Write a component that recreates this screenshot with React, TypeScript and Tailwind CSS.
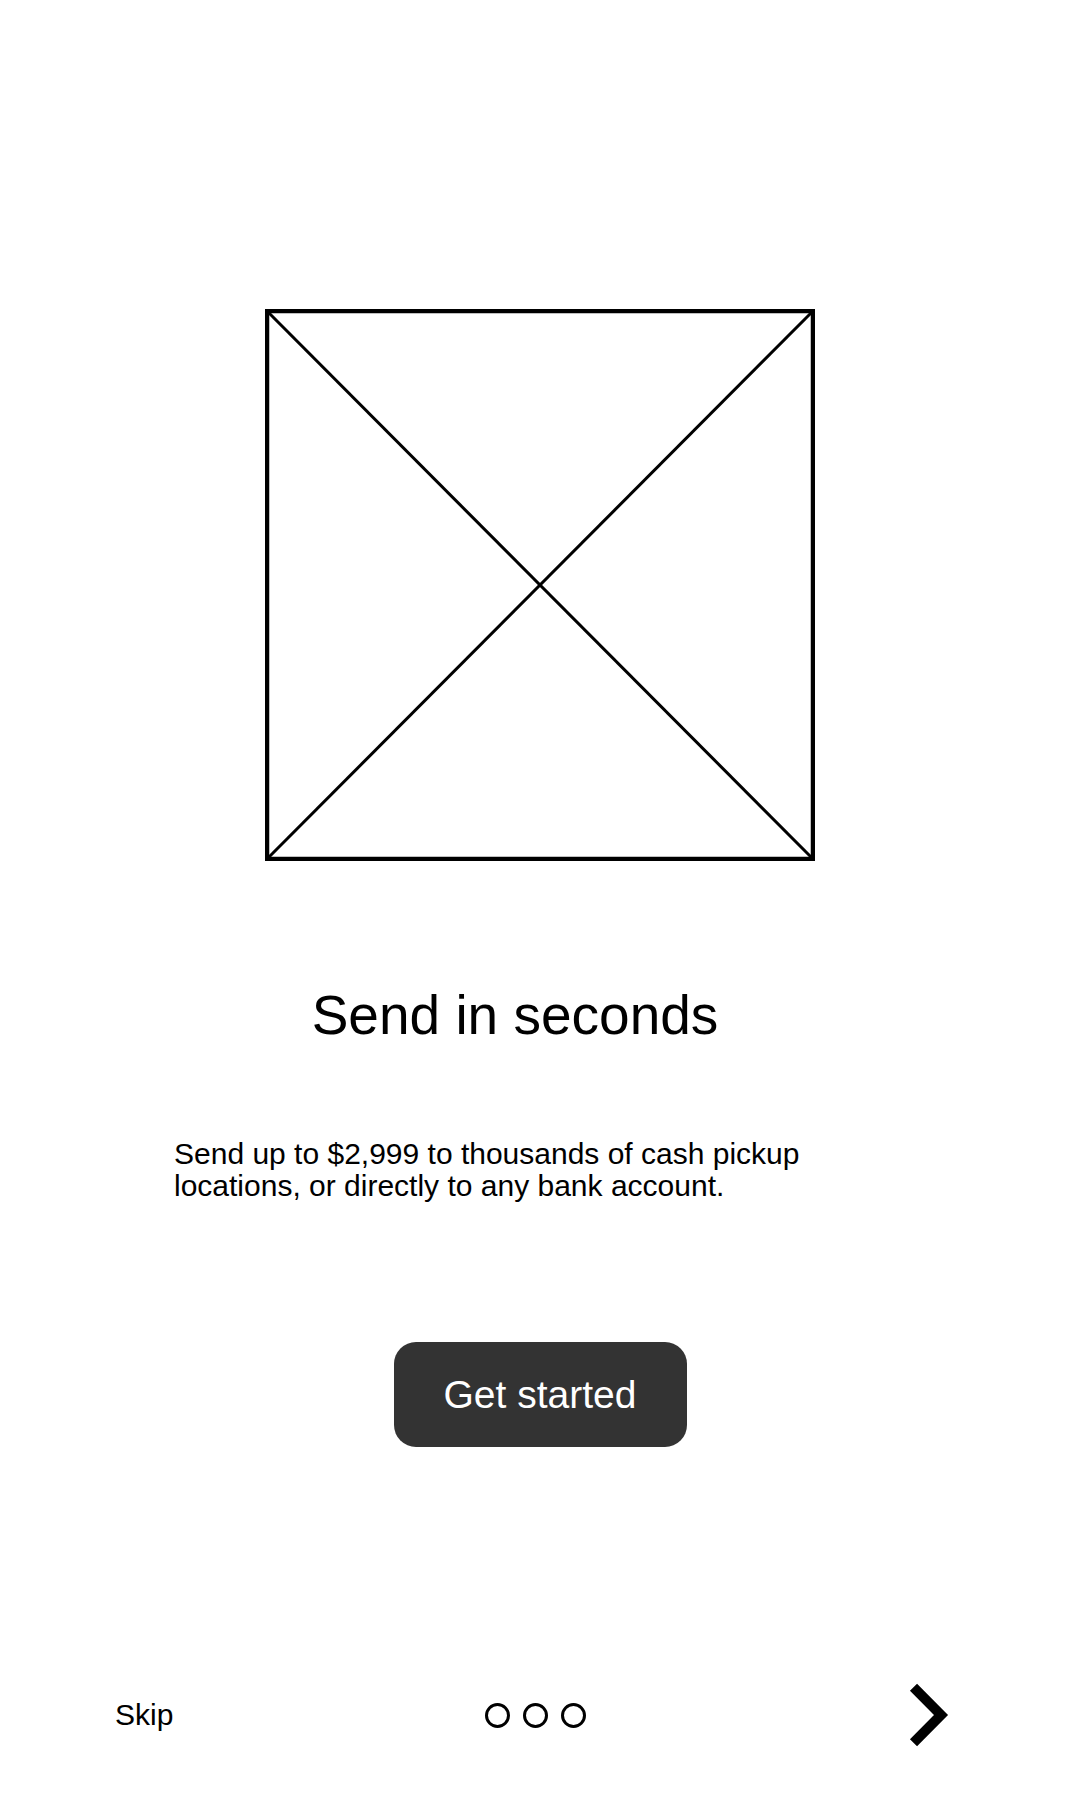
const steps = [1, 2, 3];

function Placeholder() {
  return (
    <svg width="550" height="552" viewBox="0 0 550 552" className="block">
      <rect x="2" y="2" width="546" height="548" fill="white" stroke="black" strokeWidth="4.5" />
      <line x1="2" y1="2" x2="548" y2="550" stroke="black" strokeWidth="3" />
      <line x1="548" y1="2" x2="2" y2="550" stroke="black" strokeWidth="3" />
    </svg>
  );
}

function NextArrow() {
  return (
    <svg width="48" height="72" viewBox="0 0 48 72" className="block">
      <polyline
        points="8.5,8.3 36,36 8.5,63.7"
        fill="none"
        stroke="black"
        strokeWidth="10"
        strokeLinejoin="miter"
        strokeLinecap="butt"
      />
    </svg>
  );
}

export default function App() {
  return (
    <div
      className="flex min-h-[1800px] w-[1080px] flex-col bg-white text-black"
      style={{ fontFamily: '"Liberation Sans", Arial, sans-serif' }}
    >
      <div className="flex pl-[265px] pt-[309px]">
        <Placeholder />
      </div>

      <h1 className="mt-[123px] pr-[50px] text-center text-[55px] font-normal leading-[62px]">
        Send in seconds
      </h1>

      <p className="mt-[92px] pl-[174px] text-[30px] leading-[32px]">
        Send up to $2,999 to thousands of cash pickup
        <br />
        locations, or directly to any bank account.
      </p>

      <div className="mt-[140px] flex justify-center">
        <button
          type="button"
          className="flex h-[105px] w-[293px] items-center justify-center rounded-[22px] bg-[#333333] text-[39px] leading-none text-white"
        >
          Get started
        </button>
      </div>

      <div className="mt-[232px] flex items-center pl-[115px]">
        <span className="text-[30px] leading-[28px]">Skip</span>

        <div className="ml-[312px] flex items-center gap-[13px]">
          {steps.map((s) => (
            <span
              key={s}
              className="block h-[25px] w-[25px] rounded-full border-[3px] border-black"
            />
          ))}
        </div>

        <div className="ml-[319px]">
          <NextArrow />
        </div>
      </div>
    </div>
  );
}
